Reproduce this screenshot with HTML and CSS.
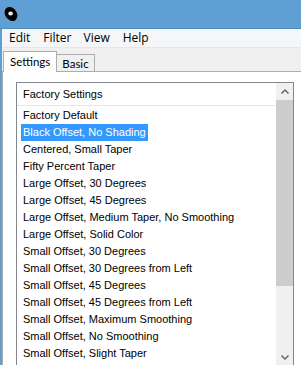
FILE: index.html
```html
<!DOCTYPE html>
<html>
<head>
<meta charset="utf-8">
<link rel="stylesheet" href="styles.css">
</head>
<body>
<div class="titlebar">
  <svg class="appicon" width="14" height="16" viewBox="0 0 14 16">
    <ellipse cx="7" cy="8" rx="5.8" ry="7.5" transform="rotate(-35 7 8)" fill="#000"/>
    <ellipse cx="6.6" cy="7.4" rx="2.3" ry="2" fill="#fff"/>
    <ellipse cx="6.9" cy="7.7" rx="0.9" ry="0.8" fill="#bbb"/>
  </svg>
</div>
<div class="frame">
  <div class="menubar">
    <span class="menu-item m-edit">Edit</span>
    <span class="menu-item m-filter">Filter</span>
    <span class="menu-item m-view">View</span>
    <span class="menu-item m-help">Help</span>
  </div>
  <div class="tabstrip">
    <div class="tab tab-active">Settings</div>
    <div class="tab">Basic</div>
  </div>
  <div class="page">
    <div class="listbox">
      <div class="list-main">
        <div class="list-header">Factory Settings</div>
        <div class="list-items">
          <div class="item"><span>Factory Default</span></div>
          <div class="item selected"><span>Black Offset, No Shading</span></div>
          <div class="item"><span>Centered, Small Taper</span></div>
          <div class="item"><span>Fifty Percent Taper</span></div>
          <div class="item"><span>Large Offset, 30 Degrees</span></div>
          <div class="item"><span>Large Offset, 45 Degrees</span></div>
          <div class="item"><span>Large Offset, Medium Taper, No Smoothing</span></div>
          <div class="item"><span>Large Offset, Solid Color</span></div>
          <div class="item"><span>Small Offset, 30 Degrees</span></div>
          <div class="item"><span>Small Offset, 30 Degrees from Left</span></div>
          <div class="item"><span>Small Offset, 45 Degrees</span></div>
          <div class="item"><span>Small Offset, 45 Degrees from Left</span></div>
          <div class="item"><span>Small Offset, Maximum Smoothing</span></div>
          <div class="item"><span>Small Offset, No Smoothing</span></div>
          <div class="item"><span>Small Offset, Slight Taper</span></div>
        </div>
      </div>
      <div class="scrollbar">
        <div class="sb-btn">
          <svg width="8" height="5" viewBox="0 0 8 5"><polyline points="0.5,4.5 4,1 7.5,4.5" fill="none" stroke="#606060" stroke-width="1.4"/></svg>
        </div>
        <div class="sb-thumb"></div>
        <div class="sb-track"></div>
        <div class="sb-btn">
          <svg width="8" height="5" viewBox="0 0 8 5"><polyline points="0.5,0.5 4,4 7.5,0.5" fill="none" stroke="#606060" stroke-width="1.4"/></svg>
        </div>
      </div>
    </div>
  </div>
</div>
</body>
</html>
```

FILE: styles.css
```css
html, body {
  margin: 0;
  padding: 0;
}
body {
  width: 301px;
  height: 365px;
  overflow: hidden;
  background: #5f9fd3;
  font-family: "Liberation Sans", Arial, sans-serif;
}
.titlebar {
  height: 28px;
  background: #5f9fd3;
  border-bottom: 1px solid #4f8dc4;
  display: flex;
  align-items: flex-start;
}
.appicon {
  margin: 6px 0 0 4px;
}
.frame {
  margin-left: 2px;
  background: #f0f0f0;
  height: 336px;
}
.menubar {
  height: 18px;
  background: #f5f6f7;
  border-bottom: 1px solid #e6e7e8;
  display: flex;
  align-items: center;
  font-family: "Open Sans", "Noto Sans", sans-serif;
  font-size: 12px;
  color: #000;
}
.menu-item {
  line-height: 18px;
}
.m-edit { margin-left: 7px; }
.m-filter { margin-left: 13px; }
.m-view { margin-left: 12px; }
.m-help { margin-left: 13px; }
.tabstrip {
  height: 23px;
  display: flex;
  align-items: flex-end;
  padding-left: 1px;
  border-bottom: 1px solid #adadad;
  font-family: Lato, "Open Sans", sans-serif;
  font-size: 11.5px;
  color: #000;
}
.tab {
  height: 16px;
  line-height: 17px;
  padding: 0 5px 0 5px;
  background: #f0f0f0;
  border: 1px solid #adadad;
  border-bottom: none;
}
.tab-active {
  height: 20px;
  line-height: 20px;
  padding: 0 6px 0 6px;
  background: #fff;
  margin-bottom: -1px;
  position: relative;
  z-index: 1;
}
.tab-active + .tab {
  margin-left: -1px;
}
.page {
  background: #fff;
  border-left: 1px solid #adadad;
  height: 300px;
  padding: 10px 0 0 13px;
}
.listbox {
  width: 276px;
  height: 283px;
  border: 1px solid #828790;
  display: flex;
  background: #fff;
}
.list-main {
  flex: 1;
  overflow: hidden;
}
.list-header {
  height: 22px;
  line-height: 23px;
  padding-left: 6px;
  border-bottom: 1px solid #dfe8f4;
  font-size: 11px;
  color: #000;
}
.list-items {
  padding-top: 1px;
}
.item {
  height: 17px;
  line-height: 17px;
  font-size: 11px;
  color: #000;
  padding-left: 4px;
  white-space: nowrap;
}
.item span {
  display: inline-block;
  padding: 0 2px;
}
.item.selected span {
  background: #3399ff;
  color: #fff;
}
.scrollbar {
  width: 17px;
  background: #f0f0f0;
  display: flex;
  flex-direction: column;
}
.sb-btn {
  height: 17px;
  display: flex;
  align-items: center;
  justify-content: center;
}
.sb-thumb {
  height: 186px;
  background: #cdcdcd;
}
.sb-track {
  flex: 1;
}
```
